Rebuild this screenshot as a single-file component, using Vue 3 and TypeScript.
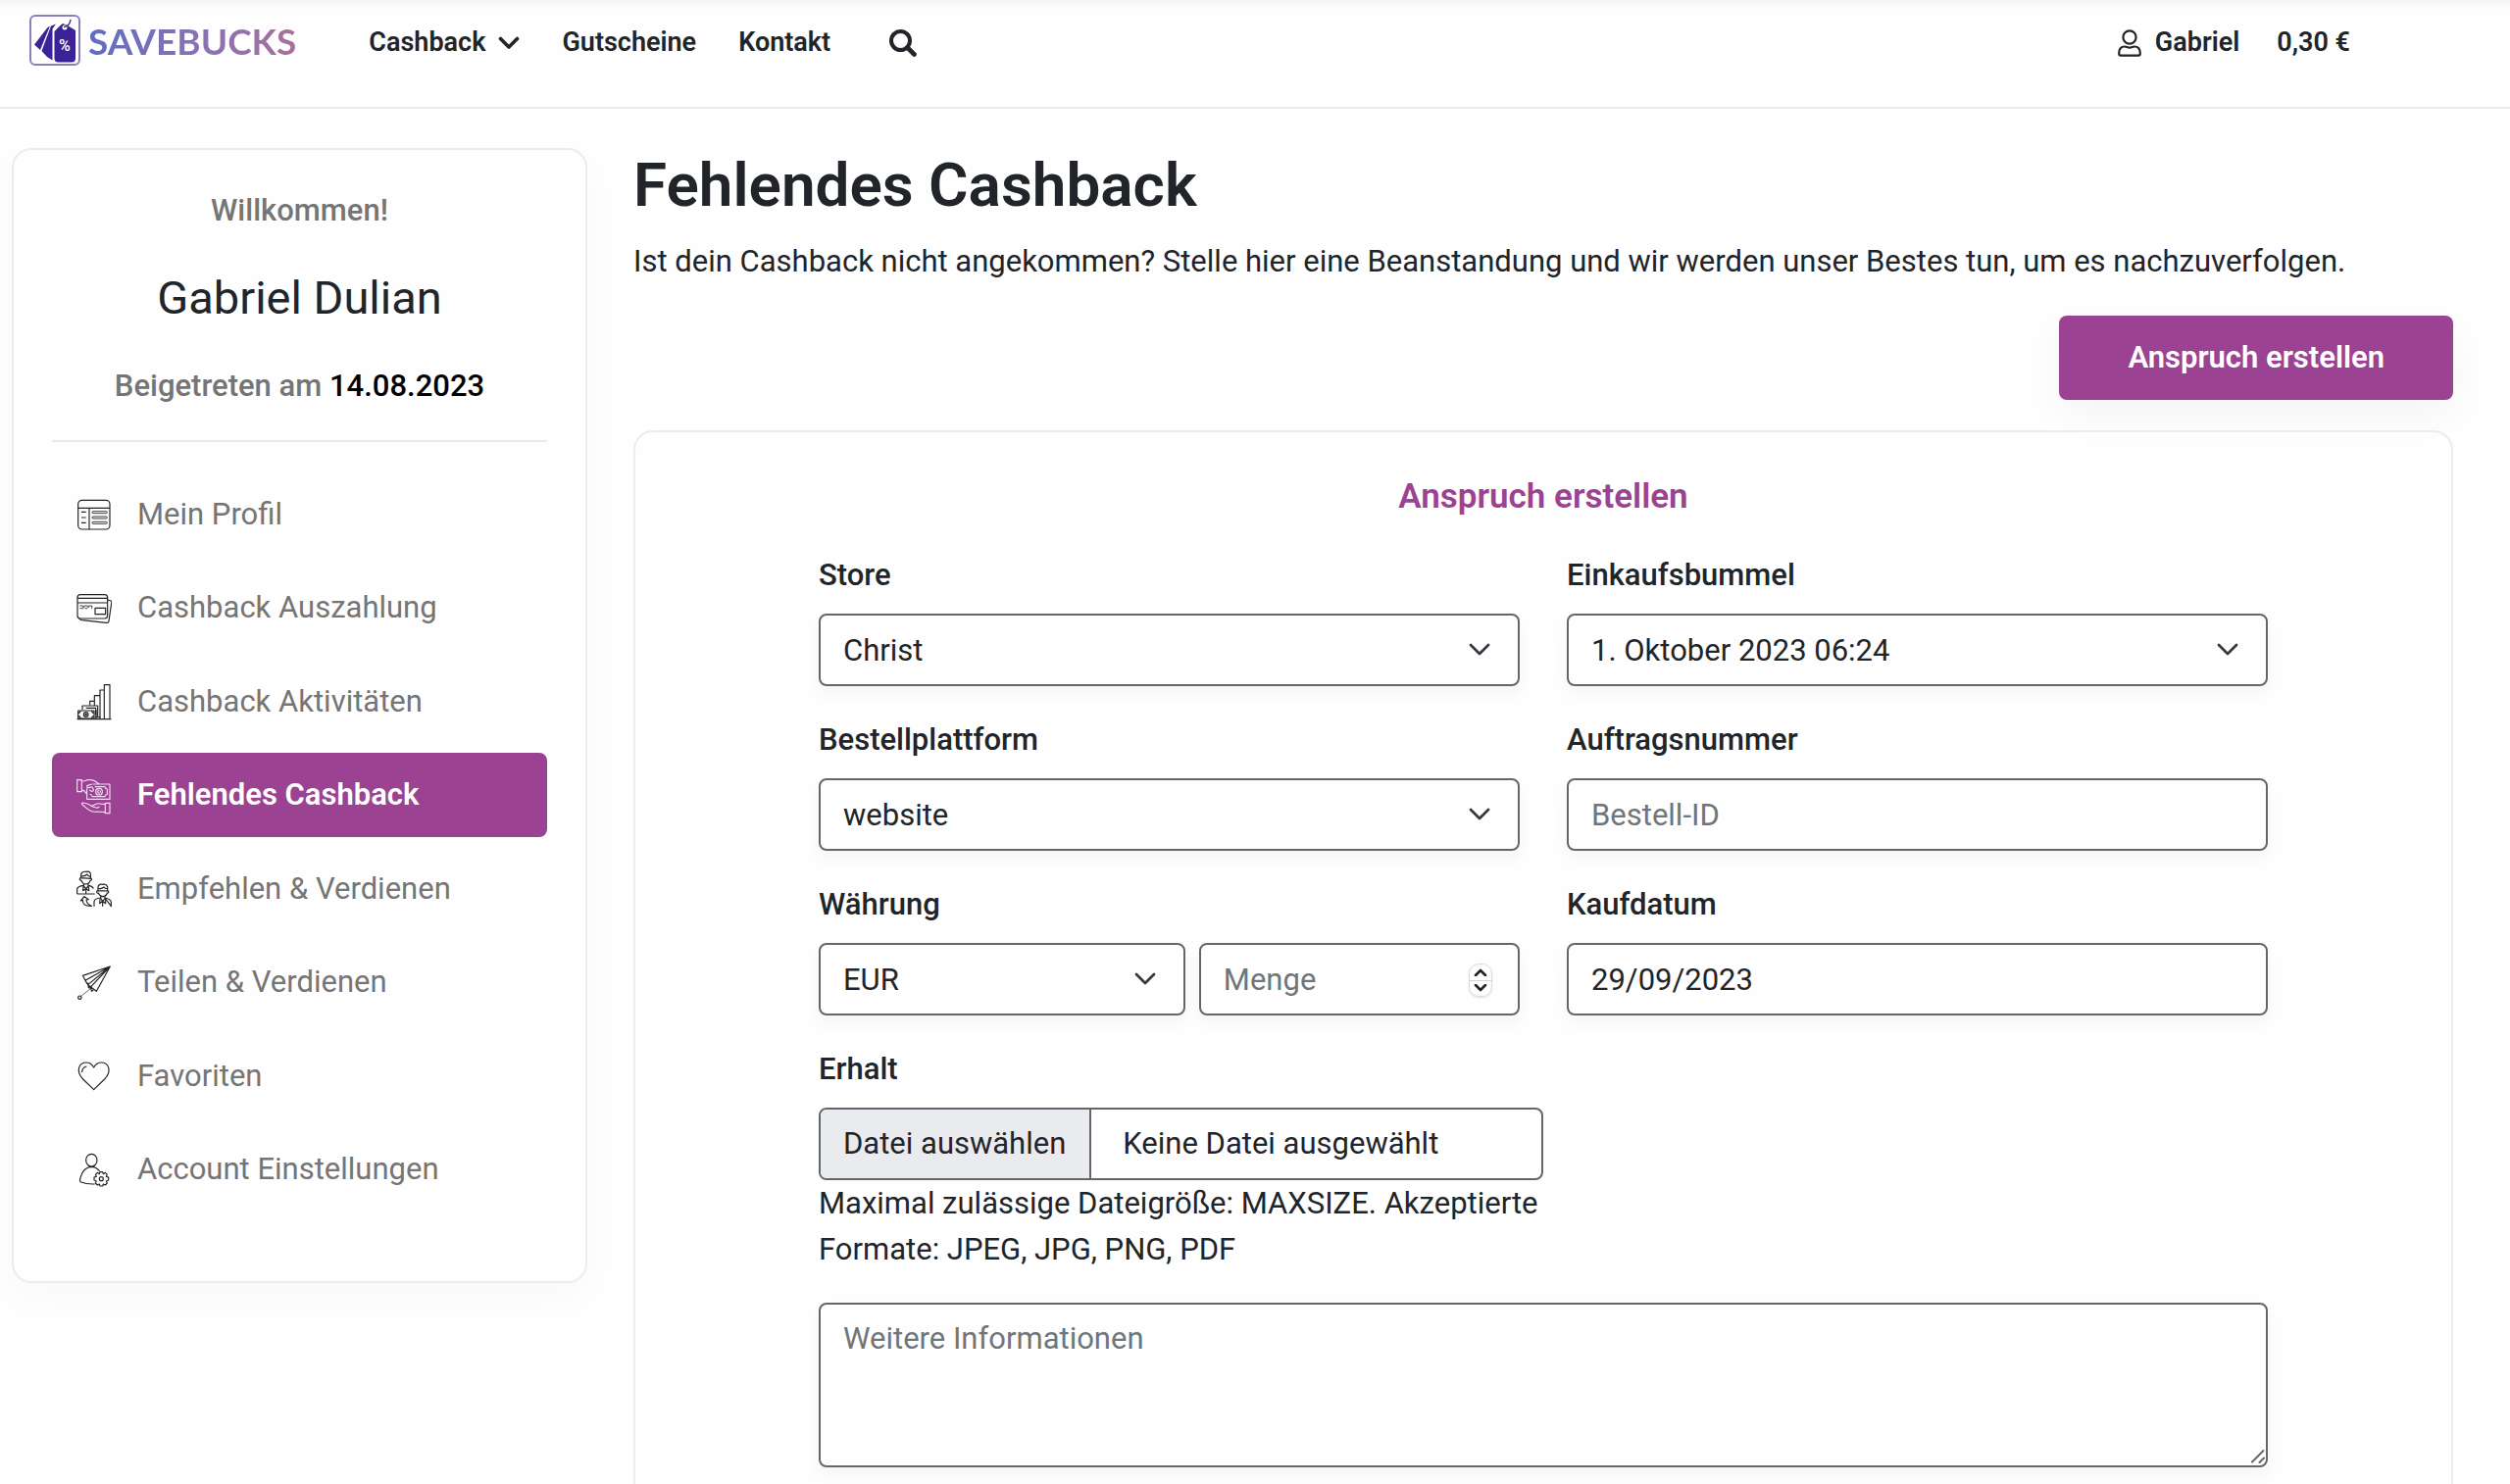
<script setup lang="ts">
import { ref } from 'vue'

interface MenuItem {
  icon: string
  label: string
  active?: boolean
}

const menu: MenuItem[] = [
  { icon: 'profile', label: 'Mein Profil' },
  { icon: 'cards', label: 'Cashback Auszahlung' },
  { icon: 'chart', label: 'Cashback Aktivitäten' },
  { icon: 'hands', label: 'Fehlendes Cashback', active: true },
  { icon: 'people', label: 'Empfehlen & Verdienen' },
  { icon: 'plane', label: 'Teilen & Verdienen' },
  { icon: 'heart', label: 'Favoriten' },
  { icon: 'account', label: 'Account Einstellungen' },
]

const store = ref('Christ')
const trip = ref('1. Oktober 2023 06:24')
const platform = ref('website')
const currency = ref('EUR')
const orderId = ref('')
const amount = ref<number | ''>('')
const purchaseDate = ref('29/09/2023')
const notes = ref('')

function step(delta: number) {
  amount.value = Math.max(0, Number(amount.value || 0) + delta)
}
</script>

<template>
  <div class="page">
    <header class="header">
      <a class="logo" href="#" aria-label="Savebucks">
        <svg class="logo-mark" viewBox="0 0 52 52" aria-hidden="true">
          <rect x="1" y="1" width="50" height="50" rx="5" fill="#fff" stroke="#8a80ba" stroke-width="2" />
          <g fill="#3b2296">
            <path d="M5 30.500 18.500 13 21 11.500 11 36Z" />
            <path d="M12.500 37 22 11.500 27 9.500 23.500 14.500V46.500L18 43Z" />
            <path d="M25.500 17 32 10.500 34 9 38 10.500 47 16V44.500Q47 48.500 43 48.500H29.500Q25.500 48.500 25.500 44.500Z" />
          </g>
          <circle cx="36" cy="13" r="2.500" fill="#fff" />
          <path d="M35 12.500Q41 12 42 5" fill="none" stroke="#3b2296" stroke-width="1.500" />
          <text x="36" y="37" text-anchor="middle" font-family="Roboto, sans-serif" font-size="16" font-weight="500" fill="#fff">%</text>
        </svg>
        <span class="logo-name">SAVEBUCKS</span>
      </a>
      <nav class="topnav" aria-label="Hauptnavigation">
        <a href="#" class="with-caret">
          Cashback
          <svg width="22" height="14" viewBox="0 0 22 14" aria-hidden="true"><path d="M2.500 2.500 11 11 19.500 2.500" fill="none" stroke="currentColor" stroke-width="3.600" stroke-linecap="round" stroke-linejoin="round" /></svg>
        </a>
        <a href="#">Gutscheine</a>
        <a href="#">Kontakt</a>
      </nav>
      <button class="search" type="button" aria-label="Suchen">
        <svg width="28" height="28" viewBox="0 0 28 28" aria-hidden="true"><circle cx="11.500" cy="11.500" r="9.500" fill="none" stroke="currentColor" stroke-width="4" /><path d="M18.500 18.500 25.500 25.500" stroke="currentColor" stroke-width="4.600" stroke-linecap="round" /></svg>
      </button>
      <div class="user">
        <a href="#" class="user-name">
          <svg width="24" height="28" viewBox="0 0 24 28" fill="none" stroke="currentColor" stroke-width="2.200" aria-hidden="true"><circle cx="12" cy="8" r="6.600" /><path d="M1.200 24.500C1.200 20 3.600 17.500 7 17.500C9 17.500 9.800 18.600 12 18.600S15 17.500 17 17.500C20.400 17.500 22.800 20 22.800 24.500Q22.800 26.700 21 26.700H3Q1.200 26.700 1.200 24.500Z" /></svg>
          Gabriel
        </a>
        <a href="#">0,30 €</a>
      </div>
    </header>

    <div class="layout">
      <aside class="sidebar">
        <p class="muted">Willkommen!</p>
        <h2 class="name">Gabriel Dulian</h2>
        <p class="muted">Beigetreten am <strong>14.08.2023</strong></p>
        <hr />
        <nav class="menu" aria-label="Konto">
          <a v-for="item in menu" :key="item.label" href="#" :class="{ active: item.active }">
            <svg class="menu-icon" viewBox="0 0 108 120" aria-hidden="true">
              <template v-if="item.icon === 'profile'">
                <rect x="5" y="19" width="97" height="89" rx="12" />
                <path d="M5 43H102M39 43V108M15 55H29M15 72H29M15 88H29" />
                <g stroke-width="2.600"><rect x="48" y="53" width="46" height="6" rx="3" /><rect x="48" y="69" width="46" height="6" rx="3" /><rect x="48" y="85" width="46" height="6" rx="3" /></g>
              </template>
              <template v-else-if="item.icon === 'cards'">
                <rect x="3" y="20" width="92" height="73" rx="9" />
                <path d="M3 31H95M3 45H95M95 36 106 39Q108 40 107 46L99 101Q98 107 92 106L16 98Q9 97 7 91" />
                <rect x="57" y="61" width="32" height="19" />
                <path stroke-width="2.400" d="M10 54H20V58H24V54H34V58H38V54H47V63M10 62H22M26 62H34" />
              </template>
              <template v-else-if="item.icon === 'chart'">
                <path d="M2 116H106M85 116V11H102V116M72 116V27H85M72 27V116M55 74V44H72M41 73V61H55M18 88V75H65V110M29 82H59V104M57 110H72M55 68V75" />
                <rect x="5" y="90" width="49" height="24" />
                <circle cx="29" cy="102" r="7" /><circle cx="29" cy="102" r="2" />
                <path d="M5 97Q12 97 12 90M5 107Q12 107 12 114M54 97Q47 97 47 90M54 107Q47 107 47 114M60 88V116" />
              </template>
              <template v-else-if="item.icon === 'hands'">
                <path d="M2 14H16V50H2ZM16 18Q27 18 33 14H45Q54 15 70 27M16 46H22L32 57M48 27 34 31Q29 36 36 38L48 36 52 43Q53 49 46 49L40 45M102 27V73H32V40M50 27H102" />
                <path d="M56 35H87Q88 41 94 42V58Q88 59 87 65H48Q46 59 41 57" />
                <circle cx="69" cy="50" r="10" /><path d="M71 45Q65 45 65 50T71 55M73 48V53" />
                <path d="M102 85V116H88V85ZM88 88H77Q68 84 57 89L46 94Q34 85 19 84Q14 85 18 90L38 106Q50 114 62 111L88 113M47 95 60 99Q68 101 70 95" />
              </template>
              <template v-else-if="item.icon === 'people'">
                <path d="M14 29V18Q17 8 29 10Q38 8 42 13Q45 18 43 30M14 23Q26 25 32 18Q36 25 43 24M14 29Q9 29 10 34Q12 38 15 37Q18 47 28 48Q39 47 42 37Q47 37 46 31ZM22 46V54L29 62 36 54V46M2 78V63Q4 54 22 52M36 52Q49 54 52 62M2 78H56M29 62V78M21 56 20 68 29 62 38 68 37 56" />
                <path d="M66 68V56Q69 47 80 49Q91 46 95 56V68M66 61Q77 64 84 57Q88 63 95 62M66 68Q61 68 62 73Q64 77 67 75Q71 85 80 86Q91 85 94 75Q99 76 98 69ZM74 84V92L80 100 87 92V84M54 116V101Q56 92 74 90M87 90Q104 93 106 103V116ZM80 100V116M72 94 71 107 80 100 89 107 89 94" />
                <path d="M46 115Q18 116 19 97L13 99 24 86 37 95 30 96Q31 109 46 115Z" />
              </template>
              <template v-else-if="item.icon === 'plane'">
                <path d="M103 12 19 40 27 55 103 12 35 68 61 88ZM27 55 35 68M27 55 19 40M35 62 37 77 48 79M103 12 42 76 47 88 53 82" />
                <path stroke-width="2" d="M47 77 15 102" /><circle cx="10" cy="107" r="5" />
              </template>
              <template v-else-if="item.icon === 'heart'">
                <path d="M53 104 20 72C-4 47 8 21 30 21Q45 21 53 36Q61 21 76 21C98 21 110 47 86 72Z" />
                <path d="M17 51Q17 36 31 33" />
              </template>
              <template v-else>
                <path d="M56 105Q30 106 14 99Q8 96 13 83Q20 56 44 52Q61 52 71 66M36 48Q46 57 56 48" />
                <ellipse cx="46" cy="32" rx="17" ry="19" />
                <path d="M72 68H80L82 74 88 70 94 76 91 82 98 84V93L91 96 94 102 88 108 82 105 80 111H72L70 105 64 108 58 102 61 96 54 93V84L61 82 58 76 64 70 70 74Z" />
                <circle cx="76" cy="89" r="6" />
              </template>
            </svg>
            <span>{{ item.label }}</span>
          </a>
        </nav>
      </aside>

      <main class="content">
        <h1>Fehlendes Cashback</h1>
        <p class="lead">Ist dein Cashback nicht angekommen? Stelle hier eine Beanstandung und wir werden unser Bestes tun, um es nachzuverfolgen.</p>
        <button class="primary" type="button">Anspruch erstellen</button>

        <section class="card">
          <h2>Anspruch erstellen</h2>
          <form class="form" @submit.prevent>
            <div class="field">
              <label for="store">Store</label>
              <div class="control">
                <select id="store" v-model="store"><option>Christ</option></select>
                <svg class="caret" viewBox="0 0 22 14" aria-hidden="true"><path d="M2 2 11 11 20 2" /></svg>
              </div>
            </div>
            <div class="field">
              <label for="trip">Einkaufsbummel</label>
              <div class="control">
                <select id="trip" v-model="trip"><option>1. Oktober 2023 06:24</option></select>
                <svg class="caret" viewBox="0 0 22 14" aria-hidden="true"><path d="M2 2 11 11 20 2" /></svg>
              </div>
            </div>
            <div class="field">
              <label for="platform">Bestellplattform</label>
              <div class="control">
                <select id="platform" v-model="platform"><option>website</option></select>
                <svg class="caret" viewBox="0 0 22 14" aria-hidden="true"><path d="M2 2 11 11 20 2" /></svg>
              </div>
            </div>
            <div class="field">
              <label for="order">Auftragsnummer</label>
              <input id="order" v-model="orderId" type="text" placeholder="Bestell-ID" />
            </div>
            <div class="field">
              <label for="currency">Währung</label>
              <div class="money">
                <div class="control">
                  <select id="currency" v-model="currency"><option>EUR</option></select>
                  <svg class="caret" viewBox="0 0 22 14" aria-hidden="true"><path d="M2 2 11 11 20 2" /></svg>
                </div>
                <div class="control">
                  <input v-model="amount" type="number" placeholder="Menge" aria-label="Menge" />
                  <div class="spinner">
                    <button type="button" aria-label="Erhöhen" @click="step(1)"><svg viewBox="0 0 14 8" aria-hidden="true"><path d="M2 7 7 2 12 7" /></svg></button>
                    <button type="button" aria-label="Verringern" @click="step(-1)"><svg viewBox="0 0 14 8" aria-hidden="true"><path d="M2 1 7 6 12 1" /></svg></button>
                  </div>
                </div>
              </div>
            </div>
            <div class="field">
              <label for="date">Kaufdatum</label>
              <input id="date" v-model="purchaseDate" type="text" />
            </div>
            <div class="field receipt">
              <label for="receipt">Erhalt</label>
              <div class="file">
                <span class="file-button">Datei auswählen</span>
                <span class="file-name">Keine Datei ausgewählt</span>
                <input id="receipt" type="file" accept=".jpeg,.jpg,.png,.pdf" />
              </div>
              <p class="help">Maximal zulässige Dateigröße: MAXSIZE. Akzeptierte Formate: JPEG, JPG, PNG, PDF</p>
            </div>
            <div class="control notes">
              <textarea v-model="notes" placeholder="Weitere Informationen" aria-label="Weitere Informationen"></textarea>
              <svg class="grip" viewBox="0 0 16 16" aria-hidden="true"><path d="M3 13.500 14.500 2M10.500 14 15 9.500" /></svg>
            </div>
          </form>
        </section>
      </main>
    </div>
  </div>
</template>

<style>
body {
  margin: 0;
  background: #fefefe;
}
</style>

<style scoped>
.page {
  height: 100vh;
  overflow: hidden;
  box-sizing: border-box;
  background: linear-gradient(#f4f4f4, #fefefe 10px);
  color: #212529;
  font-family: Roboto, "Liberation Sans", sans-serif;
  font-size: 31px;
  line-height: 47px;
}
.page *, .page *::before, .page *::after { box-sizing: border-box; }
p, h1, h2 { margin: 0; }
a { color: inherit; text-decoration: none; }
button { font: inherit; cursor: pointer; }

.header {
  display: flex;
  align-items: flex-start;
  padding: 20px 163px 42px 30px;
  border-bottom: 2px solid #ececec;
  font-size: 27px;
  font-weight: 600;
}
.logo { display: flex; align-items: center; gap: 8px; height: 42px; }
.logo-mark { width: 52px; height: 52px; }
.logo-name {
  font-family: Lato, sans-serif;
  font-size: 37px;
  font-weight: 700;
  background: linear-gradient(90deg, #5f6ec0, #8672b4 50%, #a8709c);
  background-clip: text;
  color: transparent;
}
.topnav { display: flex; gap: 43px; margin-left: 74px; }
.with-caret { display: flex; align-items: center; gap: 13px; }
.search {
  display: flex;
  align-self: center;
  margin-left: 60px;
  padding: 0;
  border: 0;
  background: none;
  color: inherit;
}
.user { display: flex; gap: 38px; margin-left: auto; }
.user-name { display: flex; align-items: center; gap: 14px; }

.layout {
  display: grid;
  grid-template-columns: 587px minmax(0, 1fr);
  align-items: start;
  gap: 47px;
  padding: 40px 58px 0 12px;
}
.sidebar {
  padding: 38px 39px 71px;
  border: 2px solid #ececec;
  border-radius: 20px;
  background: #fefefe;
  box-shadow: 0 16px 40px rgba(0, 0, 0, 0.025);
  text-align: center;
}
.muted { color: #757575; font-weight: 500; }
.muted strong { color: #000; font-weight: 500; }
.name {
  margin: 38px 0;
  font-size: 47px;
  font-weight: 400;
  line-height: 56px;
}
hr { margin: 32px 0 30px; border: 0; border-top: 2px solid #e9e9e9; }
.menu {
  display: flex;
  flex-direction: column;
  justify-content: space-between;
  min-height: 755px;
  text-align: left;
}
.menu a {
  display: flex;
  align-items: center;
  gap: 26px;
  height: 86px;
  padding: 0 25px;
  border-radius: 8px;
  color: #757575;
}
.menu-icon {
  width: 36px;
  height: 40px;
  fill: none;
  stroke: #222;
  stroke-width: 3.5;
  stroke-linejoin: round;
}
.menu .active { background: #9b4392; color: #fff; font-weight: 600; }
.active .menu-icon { stroke: #f4dcf2; }

.content { display: flex; flex-direction: column; }
h1 { font-size: 62px; font-weight: 600; line-height: 76px; }
.lead { margin: 16px 0 32px; }
.primary {
  align-self: flex-end;
  height: 86px;
  padding: 0 70px 2px;
  border: 0;
  border-radius: 8px;
  background: #9b4392;
  box-shadow: 0 16px 40px rgba(0, 0, 0, 0.04);
  color: #fff;
  font-weight: 600;
}
.card {
  margin-top: 31px;
  padding: 45px 187px 80px;
  border: 2px solid #ececec;
  border-radius: 20px;
}
.card h2 {
  color: #9b4392;
  font-size: 35px;
  font-weight: 600;
  line-height: 42px;
  text-align: center;
}
.form {
  display: grid;
  grid-template-columns: repeat(2, minmax(0, 1fr));
  gap: 31px 48px;
  margin-top: 35px;
}
.field { display: flex; flex-direction: column; gap: 16px; }
.field > label { font-weight: 500; }
.control { position: relative; }
input, select, textarea {
  display: block;
  width: 100%;
  height: 74px;
  margin: 0;
  padding: 0 23px;
  border: 2px solid #63666b;
  border-radius: 8px;
  outline: 0;
  background: #fefefe;
  box-shadow: 0 8px 16px rgba(33, 37, 60, 0.04);
  color: inherit;
  font: inherit;
  appearance: none;
}
::placeholder { color: #70757a; opacity: 1; }
input[type="number"] { appearance: textfield; }
input[type="number"]::-webkit-inner-spin-button { appearance: none; margin: 0; }
.caret {
  position: absolute;
  top: 30px;
  right: 30px;
  width: 22px;
  height: 14px;
  fill: none;
  stroke: #343a40;
  stroke-width: 2.8;
  stroke-linecap: round;
  stroke-linejoin: round;
  pointer-events: none;
}
.money { display: grid; grid-template-columns: 8fr 7fr; gap: 14px; }
.spinner {
  position: absolute;
  top: 21px;
  right: 28px;
  display: grid;
  width: 24px;
  height: 34px;
  border: 1px solid #dcdcdc;
  border-radius: 10px;
  box-shadow: 0 1px 2px rgba(0, 0, 0, 0.12);
}
.spinner button {
  display: grid;
  place-items: center;
  padding: 0;
  border: 0;
  background: none;
}
.spinner button + button { border-top: 1px solid #d4d4d4; }
.spinner svg {
  width: 14px;
  height: 8px;
  fill: none;
  stroke: #222;
  stroke-width: 2.6;
  stroke-linecap: round;
  stroke-linejoin: round;
}
.receipt { grid-column: 1 / -1; width: 50%; }
.file {
  position: relative;
  display: flex;
  align-items: stretch;
  height: 74px;
  border: 2px solid #63666b;
  border-radius: 8px;
  overflow: hidden;
  line-height: 70px;
}
.file-button { padding: 0 24px 0 23px; border-right: 2px solid #63666b; background: #e9ebef; }
.file-name { padding-left: 32px; }
.file input { position: absolute; inset: 0; opacity: 0; }
.help { margin-top: -16px; }
.notes { grid-column: 1 / -1; }
textarea { height: 168px; padding: 11px 23px; resize: none; }
.grip {
  position: absolute;
  right: 3px;
  bottom: 3px;
  width: 16px;
  height: 16px;
  fill: none;
  stroke: #63666b;
  stroke-width: 2;
  stroke-linecap: round;
  pointer-events: none;
}
</style>
